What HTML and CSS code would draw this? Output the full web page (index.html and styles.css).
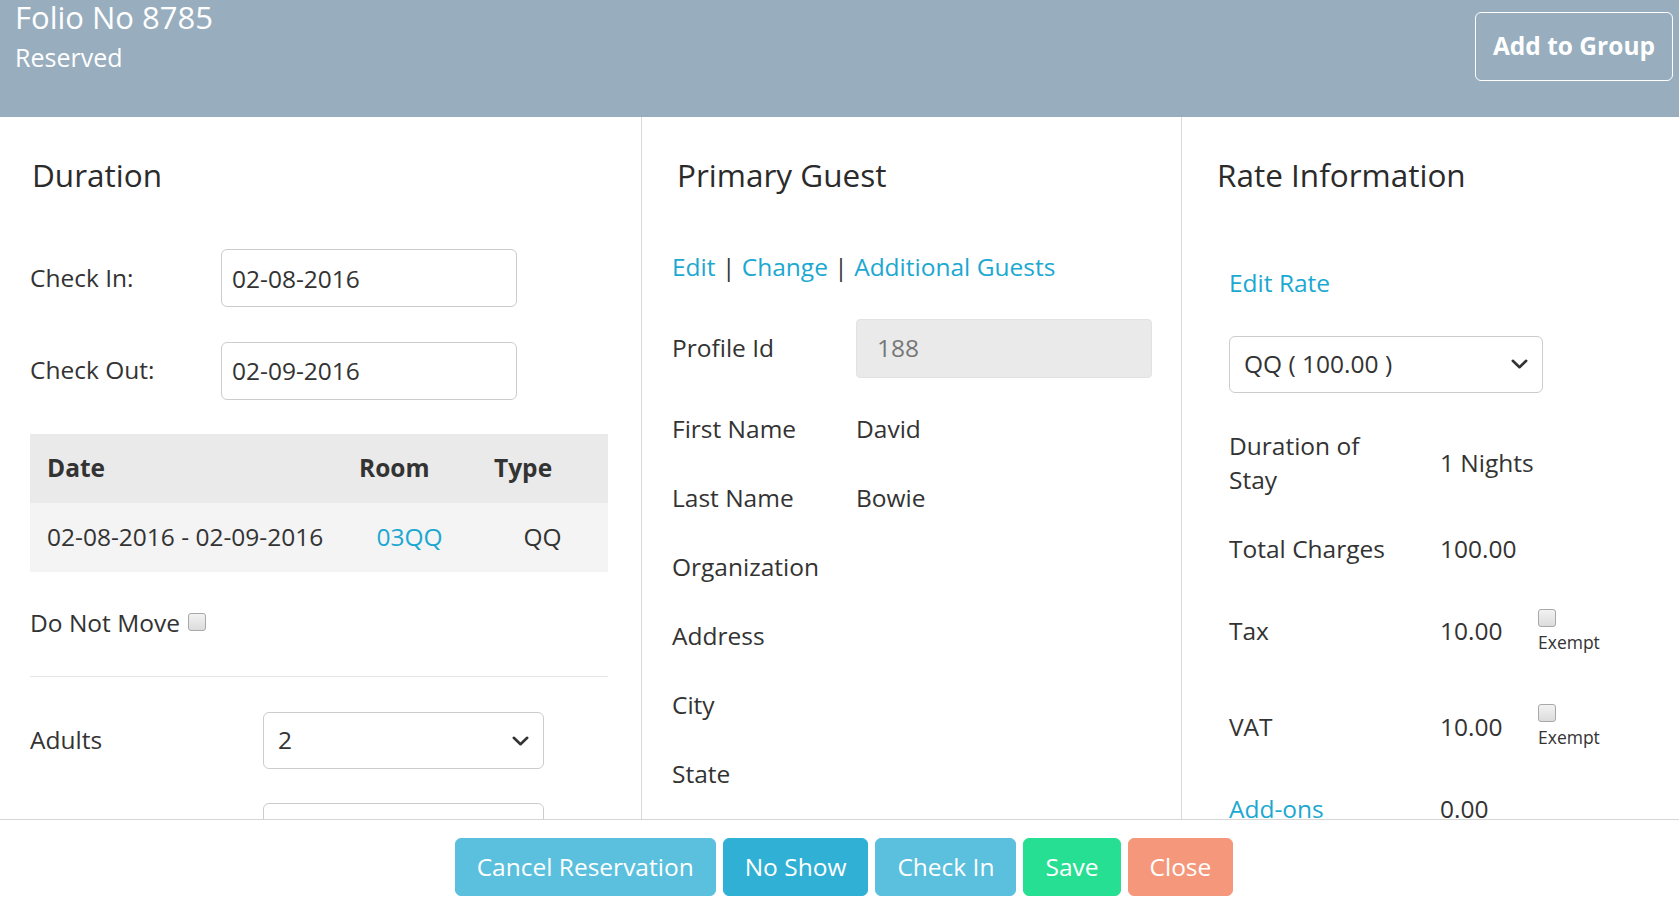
FILE: index.html
```html
<!DOCTYPE html>
<html lang="en">
<head>
<meta charset="utf-8">
<title>Folio No 8785</title>
<link rel="stylesheet" href="styles.css">
</head>
<body>
<div class="app">
  <header class="topbar">
    <div class="folio">
      <h1 class="folio-no">Folio No 8785</h1>
      <div class="folio-status">Reserved</div>
    </div>
    <button class="btn-add-group" type="button">Add to Group</button>
  </header>

  <main class="panels">
    <section class="panel panel-duration">
      <h4 class="panel-title">Duration</h4>
      <div class="field-row">
        <label class="field-label">Check In:</label>
        <input class="text-input" type="text" value="02-08-2016">
      </div>
      <div class="field-row">
        <label class="field-label">Check Out:</label>
        <input class="text-input" type="text" value="02-09-2016">
      </div>
      <table class="stay-table">
        <colgroup><col class="c-date"><col class="c-room"><col class="c-type"></colgroup>
        <thead>
          <tr><th>Date</th><th>Room</th><th>Type</th></tr>
        </thead>
        <tbody>
          <tr><td class="td-date">02-08-2016 - 02-09-2016</td><td><a class="link" href="#">03QQ</a></td><td>QQ</td></tr>
        </tbody>
      </table>
      <div class="check-line">
        <span>Do Not Move</span>
        <span class="cb cb-inline"></span>
      </div>
      <hr class="divider">
      <div class="field-row">
        <label class="field-label wide">Adults</label>
        <div class="select">
          <span>2</span>
          <svg class="chev" width="17" height="10" viewBox="0 0 17 10"><path d="M1.8 1.8 L8.5 8.2 L15.2 1.8" fill="none" stroke="#333" stroke-width="2.6" stroke-linecap="round" stroke-linejoin="round"/></svg>
        </div>
      </div>
      <div class="field-row">
        <span class="field-label wide"></span>
        <div class="select"></div>
      </div>
    </section>

    <section class="panel panel-guest">
      <h4 class="panel-title title-indent">Primary Guest</h4>
      <div class="link-row">
        <a class="link" href="#">Edit</a> <span class="sep">|</span> <a class="link" href="#">Change</a> <span class="sep">|</span> <a class="link" href="#">Additional Guests</a>
      </div>
      <div class="guest-row">
        <span class="guest-label">Profile Id</span>
        <div class="readonly-input">188</div>
      </div>
      <div class="guest-row">
        <span class="guest-label">First Name</span>
        <span class="guest-value">David</span>
      </div>
      <div class="guest-row">
        <span class="guest-label">Last Name</span>
        <span class="guest-value">Bowie</span>
      </div>
      <div class="guest-row"><span class="guest-label">Organization</span></div>
      <div class="guest-row"><span class="guest-label">Address</span></div>
      <div class="guest-row"><span class="guest-label">City</span></div>
      <div class="guest-row"><span class="guest-label">State</span></div>
    </section>

    <section class="panel panel-rate">
      <h4 class="panel-title">Rate Information</h4>
      <div class="rate-body">
        <a class="link edit-rate" href="#">Edit Rate</a>
        <div class="select select-rate">
          <span>QQ ( 100.00 )</span>
          <svg class="chev" width="17" height="10" viewBox="0 0 17 10"><path d="M1.8 1.8 L8.5 8.2 L15.2 1.8" fill="none" stroke="#333" stroke-width="2.6" stroke-linecap="round" stroke-linejoin="round"/></svg>
        </div>
        <div class="rate-row row-duration">
          <span class="rate-label">Duration of Stay</span>
          <span class="rate-value">1 Nights</span>
        </div>
        <div class="rate-row">
          <span class="rate-label">Total Charges</span>
          <span class="rate-value">100.00</span>
        </div>
        <div class="rate-row">
          <span class="rate-label">Tax</span>
          <span class="rate-value">10.00</span>
          <span class="exempt"><span class="cb"></span><span>Exempt</span></span>
        </div>
        <div class="rate-row">
          <span class="rate-label">VAT</span>
          <span class="rate-value">10.00</span>
          <span class="exempt"><span class="cb"></span><span>Exempt</span></span>
        </div>
        <div class="rate-row">
          <a class="link rate-label" href="#">Add-ons</a>
          <span class="rate-value">0.00</span>
        </div>
      </div>
    </section>
  </main>

  <footer class="actions">
    <button class="btn btn-info" type="button">Cancel Reservation</button>
    <button class="btn btn-info-dark" type="button">No Show</button>
    <button class="btn btn-info" type="button">Check In</button>
    <button class="btn btn-save" type="button">Save</button>
    <button class="btn btn-close" type="button">Close</button>
  </footer>
</div>
</body>
</html>
```

FILE: styles.css
```css
* { box-sizing: border-box; }

html, body {
  margin: 0;
  padding: 0;
  height: 100%;
}

body {
  font-family: "Open Sans", "Liberation Sans", sans-serif;
  font-size: 24.5px;
  line-height: 34.3px;
  color: #333;
  background: #fff;
}

.app {
  display: flex;
  flex-direction: column;
  height: 901px;
  overflow: hidden;
}

/* ---------- top bar ---------- */
.topbar {
  flex: 0 0 117px;
  background: #98aebe;
  color: #fff;
  display: flex;
  justify-content: space-between;
  align-items: flex-start;
  padding: 0 6px 0 15px;
}

.folio-no {
  margin: 0;
  padding-top: 1px;
  font-size: 31px;
  font-weight: 400;
  line-height: 33px;
}

.folio-status {
  margin-top: 5.5px;
  font-size: 25px;
  line-height: 34.3px;
}

.btn-add-group {
  margin-top: 12px;
  height: 69px;
  padding: 0 17px;
  background: transparent;
  color: #fff;
  border: 1px solid #fff;
  border-radius: 6px;
  font-family: "Open Sans", "Liberation Sans", sans-serif;
  font-size: 24.5px;
  font-weight: 700;
  line-height: 1;
}

/* ---------- panels ---------- */
.panels {
  flex: 1 1 auto;
  min-height: 0;
  display: flex;
  overflow: hidden;
}

.panel {
  display: flex;
  flex-direction: column;
  gap: 34.3px;
  padding-top: 41px;
}

.panel-duration {
  width: 641px;
  padding-left: 30px;
  padding-right: 33px;
}

.panel-guest {
  width: 540px;
  border-left: 1px solid #d9d9d9;
  padding-left: 30px;
  padding-right: 29px;
  gap: 34.7px;
}

.panel-rate {
  width: 498px;
  border-left: 1px solid #d9d9d9;
  padding-left: 33px;
  padding-right: 20px;
}

.panel-title {
  margin: 0 0 23px 2px;
  font-size: 31.5px;
  font-weight: 400;
  line-height: 34px;
  color: #2b2b2b;
}

.panel-title.title-indent { margin-left: 5px; }

.link {
  color: #1ba8d1;
  text-decoration: none;
}

/* duration form */
.field-row {
  display: flex;
  align-items: center;
  flex: none;
}

.field-label {
  width: 191px;
  flex: none;
}

.field-label.wide { width: 233px; }

.text-input {
  width: 296px;
  height: 58px;
  border: 1px solid #ccc;
  border-radius: 6px;
  padding: 0 10px;
  font-family: inherit;
  font-size: 24.5px;
  color: #333;
  background: #fff;
}

.select {
  width: 281px;
  height: 57px;
  border: 1px solid #ccc;
  border-radius: 6px;
  padding: 0 14px;
  display: flex;
  align-items: center;
  justify-content: space-between;
  flex: none;
  background: #fff;
}

.chev { display: block; }

.stay-table {
  width: 578px;
  border-collapse: collapse;
  flex: none;
}

.c-date { width: 312px; }
.c-room { width: 135px; }
.c-type { width: 131px; }

.stay-table th {
  height: 69px;
  padding: 0 0 0 17px;
  background: #eaeaea;
  text-align: left;
  font-weight: 700;
}

.stay-table td {
  height: 69px;
  padding: 0;
  background: #f4f4f4;
  text-align: center;
}

.stay-table td.td-date {
  text-align: left;
  padding-left: 17px;
}

.check-line {
  display: flex;
  align-items: flex-start;
  flex: none;
}

.cb {
  display: block;
  width: 18px;
  height: 18px;
  border: 1px solid #a8a8a8;
  border-radius: 3px;
  background: linear-gradient(#f2f2f2, #dcdcdc);
  flex: none;
}

.cb-inline { margin: 6.5px 0 0 8px; }

.divider {
  border: 0;
  border-top: 1px solid #e6e6e6;
  height: 0;
  margin: 1px 0;
  flex: none;
}

/* guest panel */
.link-row { flex: none; }
.sep { color: #333; }

.guest-row {
  display: flex;
  align-items: center;
  flex: none;
}

.guest-label {
  width: 184px;
  flex: none;
}

.readonly-input {
  flex: 1;
  height: 59px;
  display: flex;
  align-items: center;
  padding: 0 20px;
  background: #eaeaea;
  border: 1px solid #e2e2e2;
  border-radius: 4px;
  color: #777;
}

/* rate panel */
.rate-body {
  margin-left: 14px;
  padding-top: 17px;
  display: flex;
  flex-direction: column;
  gap: 35px;
}

.edit-rate { align-self: flex-start; }

.select-rate { width: 314px; }

.rate-row {
  display: flex;
  align-items: center;
  flex: none;
}

.row-duration { margin-top: 1px; }

.rate-label {
  width: 170px;
  margin-right: 41px;
  flex: none;
}

.rate-value {
  width: 98px;
  flex: none;
}

.exempt {
  display: flex;
  flex-direction: column;
  align-items: flex-start;
  padding: 7.5px 0;
  font-size: 17.5px;
  line-height: 24.3px;
}

.exempt .cb { margin-bottom: 3px; }

/* ---------- footer actions ---------- */
.actions {
  flex: 0 0 82px;
  border-top: 1px solid #d6d6d6;
  display: flex;
  justify-content: center;
  align-items: flex-start;
  gap: 7px;
  padding: 18px 0 0 9px;
  background: #fff;
}

.btn {
  height: 58px;
  padding: 0 21px;
  border: 1px solid transparent;
  border-radius: 6px;
  color: #fff;
  font-family: "Open Sans", "Liberation Sans", sans-serif;
  font-size: 24.5px;
  line-height: 1;
}

.btn-info { background: #5bc0de; border-color: #5bc0de; }
.btn-info-dark { background: #31b0d5; border-color: #31b0d5; }
.btn-save { background: #26df92; border-color: #26df92; }
.btn-close { background: #f5977b; border-color: #f5977b; }
```
